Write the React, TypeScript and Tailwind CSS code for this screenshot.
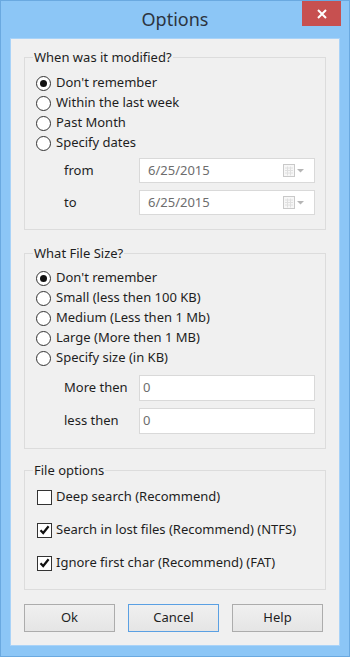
import { useState } from 'react'

const SIZES = [
  "Don't remember",
  'Small (less then 100 KB)',
  'Medium (Less then 1 Mb)',
  'Large (More then 1 MB)',
  'Specify size (in KB)',
]

const DATES = ["Don't remember", 'Within the last week', 'Past Month', 'Specify dates']

function Radio({ checked, label, onClick }: { checked: boolean; label: string; onClick: () => void }) {
  return (
    <div className="h-[20px] flex items-center gap-[5px] cursor-default" onClick={onClick}>
      <span className="w-[15px] h-[15px] rounded-full border border-[#333] bg-white flex items-center justify-center">
        {checked && <span className="w-[7px] h-[7px] rounded-full bg-[#111]" />}
      </span>
      <span>{label}</span>
    </div>
  )
}

function Check({ checked, label, onClick }: { checked: boolean; label: string; onClick: () => void }) {
  return (
    <div className="h-[20px] flex items-center gap-[4px] cursor-default" onClick={onClick}>
      <span className="w-[15px] h-[15px] border border-[#333] bg-white flex items-center justify-center">
        {checked && (
          <svg width="11" height="10" viewBox="0 0 11 10">
            <path d="M1.5 5.2 L4.2 8 L9.6 1.3" fill="none" stroke="#111" strokeWidth="2.2" />
          </svg>
        )}
      </span>
      <span>{label}</span>
    </div>
  )
}

function DateBox({ value }: { value: string }) {
  return (
    <div className="w-[176px] h-[25px] bg-white border border-[#d9d9d9] flex items-center pl-[8px] pr-[9px] text-[#6d6d6d]">
      <span className="flex-1">{value}</span>
      <svg width="22" height="13" viewBox="0 0 22 13">
        <rect x="0.5" y="0.5" width="11" height="12" fill="#f7f7f7" stroke="#c9c9c9" />
        <path d="M2 4h8M2 6.5h8M2 9h8M4.5 2.5v9M7.5 2.5v9" stroke="#e0e0e0" strokeWidth="1" />
        <path d="M14 5 L21 5 L17.5 8.5 Z" fill="#b5b5b5" />
      </svg>
    </div>
  )
}

function NumBox({ value }: { value: string }) {
  return (
    <div className="w-[176px] h-[26px] bg-white border border-[#d9d9d9] flex items-center pl-[3px] text-[#6d6d6d]">
      {value}
    </div>
  )
}

export default function App() {
  const [when, setWhen] = useState(0)
  const [size, setSize] = useState(0)
  const [opts, setOpts] = useState([false, true, true])

  const toggle = (i: number) => setOpts(opts.map((o, j) => (j === i ? !o : o)))

  return (
    <div className="w-[350px] h-[657px] bg-[#8cc6f6] border border-[#6aa9e0] flex flex-col px-[9px] pb-[10px] font-['Noto_Sans',Arial,sans-serif] text-[13px] text-[#1e1e1e]">
      {/* title bar */}
      <div className="h-[37px] grid grid-cols-[1fr_auto_1fr]">
        <div />
        <div className="text-[18px] leading-[37px] text-[#2d3440]">Options</div>
        <div className="flex justify-end items-start">
          <button className="w-[39px] h-[25px] -mr-px bg-[#c75050] flex items-center justify-center">
            <svg width="10" height="10" viewBox="0 0 10 10">
              <path d="M1 1 L9 9 M9 1 L1 9" stroke="#fff" strokeWidth="2" />
            </svg>
          </button>
        </div>
      </div>

      {/* client area */}
      <div className="flex-1 bg-[#f0f0f0] border border-[#a9d3f8] px-[13px]">
        <fieldset className="mt-[9px] border border-[#dcdcdc] px-[8px] pb-[14px]">
          <legend className="px-[1px] leading-[18px]">When was it modified?</legend>
          <div className="pl-[3px] pr-[2px] pt-[7px]">
            {DATES.map((d, i) => (
              <Radio key={d} label={d} checked={when === i} onClick={() => setWhen(i)} />
            ))}
            <div className="mt-[5px] h-[25px] flex items-center">
              <span className="ml-[28px] w-[75px]">from</span>
              <DateBox value="6/25/2015" />
            </div>
            <div className="mt-[7px] h-[25px] flex items-center">
              <span className="ml-[28px] w-[75px]">to</span>
              <DateBox value="6/25/2015" />
            </div>
          </div>
        </fieldset>

        <fieldset className="mt-[14px] border border-[#dcdcdc] px-[8px] pb-[14px]">
          <legend className="px-[1px] leading-[18px]">What File Size?</legend>
          <div className="pl-[3px] pr-[2px] pt-[6px]">
            {SIZES.map((s, i) => (
              <Radio key={s} label={s} checked={size === i} onClick={() => setSize(i)} />
            ))}
            <div className="mt-[7px] h-[26px] flex items-center">
              <span className="ml-[28px] w-[75px]">More then</span>
              <NumBox value="0" />
            </div>
            <div className="mt-[7px] h-[26px] flex items-center">
              <span className="ml-[28px] w-[75px]">less then</span>
              <NumBox value="0" />
            </div>
          </div>
        </fieldset>

        <fieldset className="mt-[12px] border border-[#dcdcdc] px-[8px] pb-[16px]">
          <legend className="px-[1px] leading-[18px]">File options</legend>
          <div className="pl-[4px] pt-[8px] flex flex-col gap-[13px]">
            <Check label="Deep search (Recommend)" checked={opts[0]} onClick={() => toggle(0)} />
            <Check label="Search in lost files (Recommend) (NTFS)" checked={opts[1]} onClick={() => toggle(1)} />
            <Check label="Ignore first char (Recommend) (FAT)" checked={opts[2]} onClick={() => toggle(2)} />
          </div>
        </fieldset>

        <div className="mt-[14px] flex gap-[13px]">
          <button className="w-[91px] h-[28px] border border-[#acacac] bg-gradient-to-b from-[#f0f0f0] to-[#e5e5e5]">Ok</button>
          <button className="w-[91px] h-[28px] border border-[#5aa0e3] bg-gradient-to-b from-[#f0f0f0] to-[#e5e5e5]">Cancel</button>
          <button className="w-[91px] h-[28px] border border-[#acacac] bg-gradient-to-b from-[#f0f0f0] to-[#e5e5e5]">Help</button>
        </div>
      </div>
    </div>
  )
}
